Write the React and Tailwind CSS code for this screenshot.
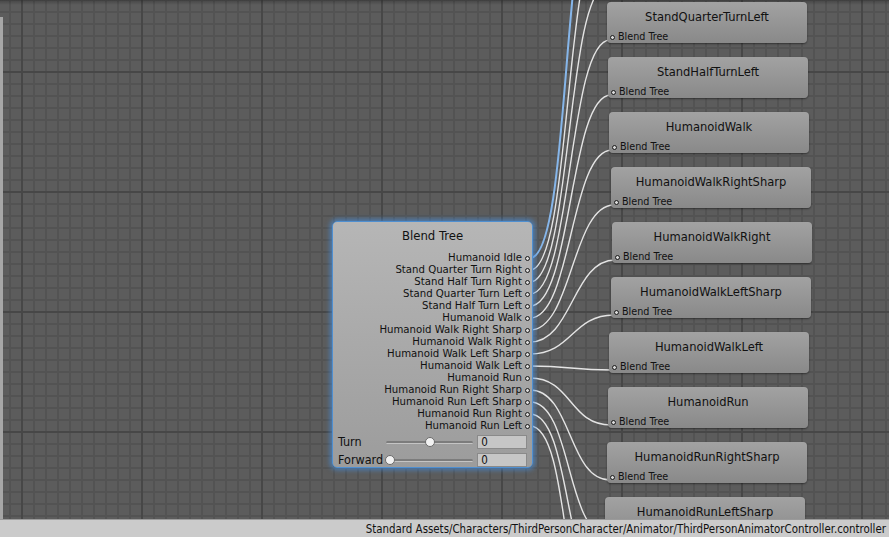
import React from "react";

const outputs = [
  "Humanoid Idle",
  "Stand Quarter Turn Right",
  "Stand Half Turn Right",
  "Stand Quarter Turn Left",
  "Stand Half Turn Left",
  "Humanoid Walk",
  "Humanoid Walk Right Sharp",
  "Humanoid Walk Right",
  "Humanoid Walk Left Sharp",
  "Humanoid Walk Left",
  "Humanoid Run",
  "Humanoid Run Right Sharp",
  "Humanoid Run Left Sharp",
  "Humanoid Run Right",
  "Humanoid Run Left",
];

// nodes of the graph, canvas coordinates
const states = [
  { name: "StandQuarterTurnLeft", x: 607, y: 2 },
  { name: "StandHalfTurnLeft", x: 608, y: 57 },
  { name: "HumanoidWalk", x: 609, y: 112 },
  { name: "HumanoidWalkRightSharp", x: 611, y: 167 },
  { name: "HumanoidWalkRight", x: 612, y: 222 },
  { name: "HumanoidWalkLeftSharp", x: 611, y: 277 },
  { name: "HumanoidWalkLeft", x: 609, y: 332 },
  { name: "HumanoidRun", x: 608, y: 387 },
  { name: "HumanoidRunRightSharp", x: 607, y: 442 },
  { name: "HumanoidRunLeftSharp", x: 605, y: 497 },
];

// off-screen targets for the outputs that leave the view
const hidden = [
  { x: 600, y: -163 },
  { x: 603, y: -108 },
  { x: 605, y: -53 },
];
const below = [
  { x: 603, y: 552 },
  { x: 600, y: 607 },
];

const targets = [...hidden, ...states, ...below].map((s) => ({ x: s.x + 3, y: s.y + 38 }));

function curve(x1, y1, x2, y2) {
  const d = 42;
  return `M${x1} ${y1} C${x1 + d} ${y1} ${x2 - d} ${y2} ${x2} ${y2}`;
}

function Dot() {
  return <span className="inline-block w-[5px] h-[5px] rounded-full border border-[#1a1a1a] bg-[#d8d8d8] shrink-0" />;
}

function StateNode({ name, x, y }) {
  return (
    <div
      className="absolute w-[200px] h-[41px] rounded-[4px] bg-gradient-to-b from-[#a2a2a2] to-[#898989] shadow-[0_1px_2px_rgba(0,0,0,0.45)] flex flex-col"
      style={{ left: x, top: y }}
    >
      <div className="h-[32px] pt-[6px] text-center text-[12.8px] leading-[18px] text-[#111]">{name}</div>
      <div className="flex items-center gap-[3px] pl-[3px] text-[10.7px] leading-[12px] text-[#111]">
        <Dot />
        <span>Blend Tree</span>
      </div>
    </div>
  );
}

function Slider({ value }) {
  return (
    <div className="relative w-[88px] h-[14px] flex items-center">
      <div className="w-full h-[3px] rounded-full bg-[#7c7c7c] border-b border-[#c4c4c4]" />
      <div
        className="absolute top-[2px] w-[10px] h-[10px] rounded-full bg-[#f2f2f2] border border-[#6a6a6a] -translate-x-1/2"
        style={{ left: value }}
      />
    </div>
  );
}

function BlendTree() {
  return (
    <div className="absolute left-[332px] top-[221px] w-[201px] h-[247px] rounded-[5px] bg-gradient-to-b from-[#b6b6b6] to-[#9c9c9c] border border-[#4f8fd0] shadow-[0_0_5px_2px_rgba(70,140,215,0.7)] flex flex-col">
      <div className="pt-[7px] h-[30px] text-center text-[13px] leading-[14px] text-[#111]">Blend Tree</div>
      <div className="flex flex-col">
        {outputs.map((o) => (
          <div key={o} className="h-[12px] flex items-center justify-end gap-[3px] pr-[2px] text-[11.3px] leading-[12px] text-[#111]">
            <span>{o}</span>
            <Dot />
          </div>
        ))}
      </div>
      <div className="mt-[3px] flex flex-col gap-[4px] pl-[5px] pr-[5px] text-[12.5px] text-[#111]">
        <div className="flex items-center h-[14px]">
          <span className="w-[48px]">Turn</span>
          <Slider value={44} />
          <div className="ml-[4px] w-[50px] h-[14px] bg-[#c6c6c6] border border-[#8a8a8a] pl-[3px] text-[11.5px] leading-[12px]">0</div>
        </div>
        <div className="flex items-center h-[14px]">
          <span className="w-[48px]">Forward</span>
          <Slider value={4} />
          <div className="ml-[4px] w-[50px] h-[14px] bg-[#c6c6c6] border border-[#8a8a8a] pl-[3px] text-[11.5px] leading-[12px]">0</div>
        </div>
      </div>
    </div>
  );
}

export default function App() {
  return (
    <div
      className="w-[889px] h-[537px] flex flex-col overflow-hidden bg-[#5b5b5b]"
      style={{ fontFamily: '"DejaVu Sans Condensed", "DejaVu Sans", sans-serif' }}
    >
      <div className="relative flex-1 overflow-hidden">
        <svg className="absolute inset-0" width="889" height="519">
          <defs>
            <pattern id="minor" width="12" height="12" patternUnits="userSpaceOnUse" x="9" y="11">
              <rect width="12" height="12" fill="#5c5c5c" />
              <rect width="2" height="12" fill="#535353" />
              <rect width="12" height="2" fill="#535353" />
            </pattern>
            <pattern id="major" width="120" height="120" patternUnits="userSpaceOnUse" x="21" y="71">
              <rect width="2" height="120" fill="#474747" />
              <rect width="120" height="2" fill="#474747" />
            </pattern>
            <linearGradient id="top" x1="0" y1="0" x2="0" y2="1">
              <stop offset="0" stopColor="#000" stopOpacity="0.25" />
              <stop offset="1" stopColor="#000" stopOpacity="0" />
            </linearGradient>
          </defs>
          <rect width="889" height="519" fill="url(#minor)" />
          <rect width="889" height="519" fill="url(#major)" />
          <rect width="889" height="5" fill="url(#top)" />
          <rect x="0" y="17" width="3" height="502" fill="#a6a6a6" />
          {outputs.map((o, i) => {
            const t = targets[i];
            return (
              <path
                key={o}
                d={curve(530, 258 + 12 * i, t.x, t.y)}
                fill="none"
                stroke={i === 0 ? "#86b6ea" : "#e4e4e4"}
                strokeWidth={i === 0 ? 2 : 1.4}
              />
            );
          })}
        </svg>
        <BlendTree />
        {states.map((s) => (
          <StateNode key={s.name} {...s} />
        ))}
      </div>
      <div className="relative z-10 h-[18px] pt-[2px] bg-[#cbcbcb] border-t border-[#9a9a9a] flex items-center justify-end pr-[3px] text-[11.4px] text-[#111]">
        Standard Assets/Characters/ThirdPersonCharacter/Animator/ThirdPersonAnimatorController.controller
      </div>
    </div>
  );
}
